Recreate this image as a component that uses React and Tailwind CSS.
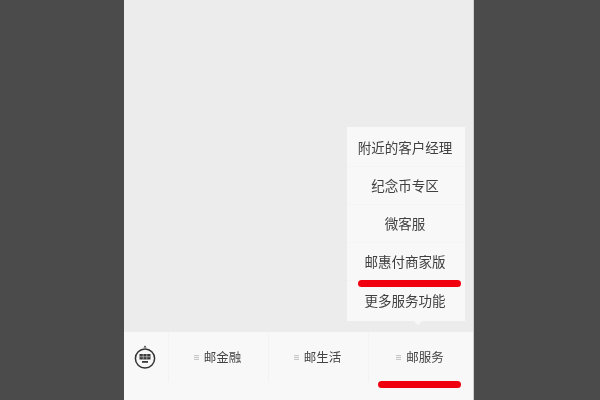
const FONT = "font-['Noto_Sans_CJK_SC','Noto_Sans',sans-serif]";

function Tab({ label, width }) {
  return (
    <div className={`${width} h-[50px] pr-[2px] flex items-center justify-center gap-[5px] text-[12.5px] text-[#444] border-l border-[#f3f3f3]`}>
      <span className="w-[5px] h-[5px] bg-[repeating-linear-gradient(#c8c8c8_0,#c8c8c8_1px,#f1f1f1_1px,#f1f1f1_2px)]" />
      <span className="blur-[0.3px]">{label}</span>
    </div>
  );
}

function MenuItem({ label, last }) {
  return (
    <div className={`h-[38px] pr-[2px] flex items-center justify-center text-[13.5px] text-[#404040] ${last ? '' : 'border-b border-[#f5f5f5]'}`}>
      <span className="blur-[0.3px]">{label}</span>
    </div>
  );
}

export default function App() {
  return (
    <div className={`w-[600px] h-[400px] bg-[#4b4b4b] flex justify-center overflow-hidden ${FONT}`}>
      <div className="relative w-[350px] ml-[-2px] h-full flex flex-col bg-[#ececec] border-r border-[#cfcfcf]">
        <div className="flex-1 flex flex-col justify-end items-end pr-[8px] pb-[11px]">
          <div className="relative w-[118px] py-[2px] bg-[#f8f8f8] flex flex-col">
            <MenuItem label="附近的客户经理" />
            <MenuItem label="纪念币专区" />
            <MenuItem label="微客服" />
            <MenuItem label="邮惠付商家版" />
            <MenuItem label="更多服务功能" last />
            <div className="absolute left-[68px] bottom-[-3px] w-[6px] h-[6px] rotate-45 bg-[#f8f8f8]" />
          </div>
        </div>
        <div className="h-[68px] bg-[#f8f8f8] flex items-start">
          <div className="w-[44px] h-[50px] flex items-center justify-center pt-[2px] pr-[2px]">
            <svg width="22" height="26" viewBox="0 0 22 26" fill="none">
              <path d="M11 0.5 L12.6 2.6 H9.4 Z" fill="#333" />
              <circle cx="11" cy="13.5" r="9.6" stroke="#333" strokeWidth="1.5" />
              <rect x="5.5" y="9" width="11" height="5.5" fill="#3a3a3a" />
              <path d="M5.5 11.7H16.5M9.2 9V14.5M12.8 9V14.5" stroke="#d8d8d8" strokeWidth="0.6" />
              <rect x="8" y="16" width="6" height="1.8" fill="#3a3a3a" />
            </svg>
          </div>
          <Tab label="邮金融" width="w-[100px]" />
          <Tab label="邮生活" width="w-[100px]" />
          <Tab label="邮服务" width="flex-1" />
        </div>
        <div className="absolute left-[234px] top-[280px] w-[103px] h-[7px] rounded-full bg-[#f0000f] blur-[0.5px]" />
        <div className="absolute left-[254px] top-[381px] w-[83px] h-[7px] rounded-full bg-[#f0000f] blur-[0.5px]" />
      </div>
    </div>
  );
}
